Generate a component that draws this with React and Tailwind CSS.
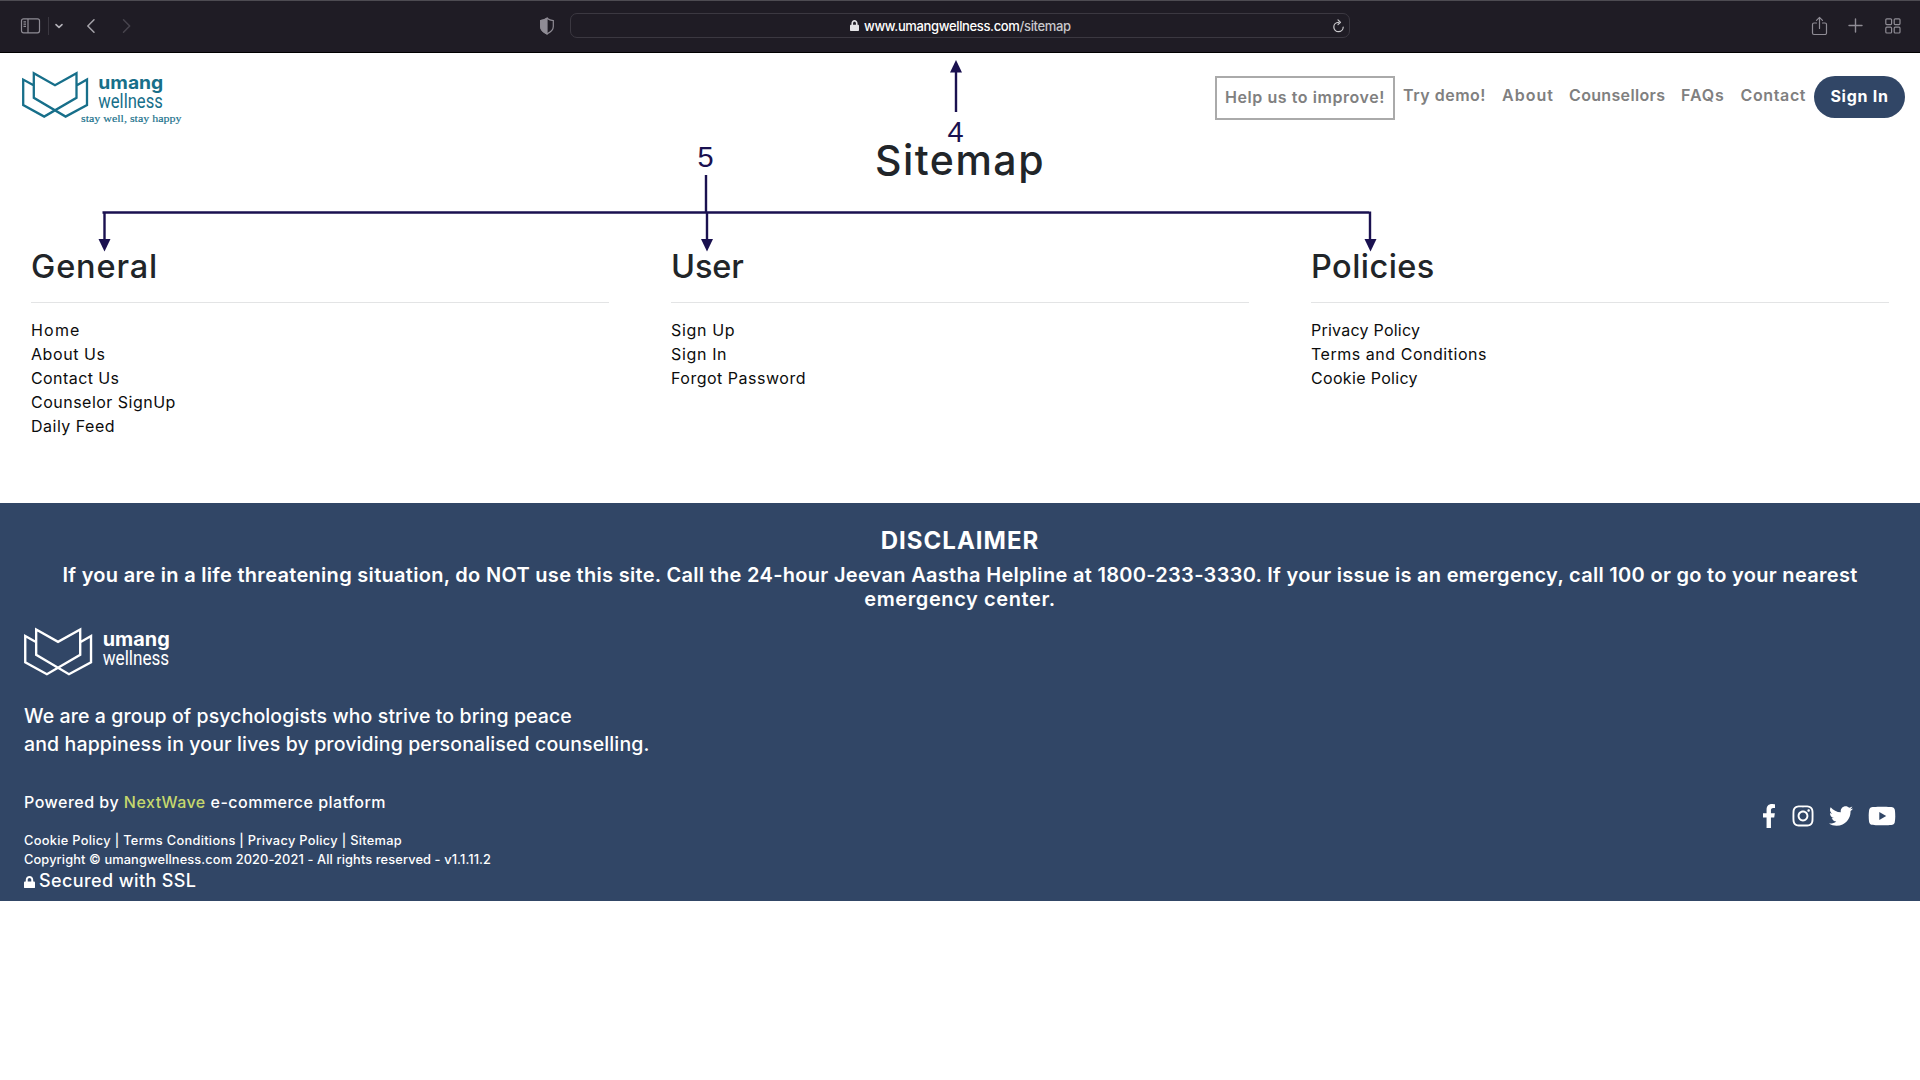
import { FaFacebookF, FaInstagram, FaTwitter, FaYoutube, FaLock } from "react-icons/fa";

const columns = [
  {
    title: "General",
    titleClass: "tracking-[0.85px]",
    links: [
      ["Home", "tracking-[1.2px]"],
      ["About Us", "tracking-[0.57px]"],
      ["Contact Us", "tracking-[0.42px]"],
      ["Counselor SignUp", "tracking-[0.49px]"],
      ["Daily Feed", "tracking-[0.49px]"],
    ],
  },
  {
    title: "User",
    titleClass: "tracking-[-0.1px]",
    links: [
      ["Sign Up", "tracking-[0.65px]"],
      ["Sign In", "tracking-[0.65px]"],
      ["Forgot Password", "tracking-[0.51px]"],
    ],
  },
  {
    title: "Policies",
    titleClass: "tracking-[0.45px]",
    links: [
      ["Privacy Policy", "tracking-[0.24px]"],
      ["Terms and Conditions", "tracking-[0.53px]"],
      ["Cookie Policy", "tracking-[0.33px]"],
    ],
  },
];

const nav = [
  ["Try demo!", "w-[99px] tracking-[0.5px]"],
  ["About", "w-[67px] tracking-[1.05px]"],
  ["Counsellors", "w-[112px] tracking-[0.34px]"],
  ["FAQs", "w-[59.5px] tracking-[0.93px]"],
  ["Contact", "w-[73.5px] tracking-[0.63px]"],
];

function Logo({ className, tagline }) {
  return (
    <svg className={className} viewBox="0 0 160 54" fill="none">
      <path
        d="M12 14.6 L1.2 8.6 V34 L22.2 45.6 L54.5 26.8 V2.2 L33 14.3 L11.8 2.2 V26.8 L43.6 45.6 L65 34 V8.6 L54.5 14.6"
        stroke="currentColor"
        strokeWidth="2.3"
      />
      <text x="76.3" y="18.1" textLength="65" lengthAdjust="spacingAndGlyphs" fill="currentColor" className="font-[Inter] text-[18.5px] font-bold">
        umang
      </text>
      <text x="76.3" y="37" textLength="64.5" lengthAdjust="spacingAndGlyphs" fill="currentColor" className="font-[Roboto] text-[19.5px]">
        wellness
      </text>
      {tagline && (
        <text x="59" y="51" textLength="100.5" lengthAdjust="spacingAndGlyphs" fill="currentColor" stroke="currentColor" strokeWidth="0.15" className="font-['Liberation_Serif'] text-[10.5px]">
          {tagline}
        </text>
      )}
    </svg>
  );
}

function BrowserBar() {
  return (
    <div className="flex h-[53px] items-center border-t border-b border-t-[#4d4b52] border-b-black bg-[#1f1c25] pb-[2px] text-[#8f8c95]">
      <svg className="ml-[20px] h-[18px] w-[21px] shrink-0" viewBox="0 0 21 18" fill="none" stroke="currentColor" strokeWidth="1.2">
        <rect x="1.5" y="1.8" width="18" height="14" rx="2" />
        <path d="M8 2v14M3.5 4.8h2.5M3.5 7.1h2.5M3.5 9.4h2.5" />
      </svg>
      <div className="ml-[7px] h-[18px] w-px bg-[#3a3740]" />
      <svg className="ml-[5px] h-[8px] w-[10px] shrink-0" viewBox="0 0 10 8" fill="none" stroke="#b3b1b8" strokeWidth="1.6" strokeLinecap="round" strokeLinejoin="round">
        <path d="M2 2.6l3 2.8 3-2.8" />
      </svg>
      <svg className="ml-[21px] h-[16px] w-[12px] shrink-0" viewBox="0 0 12 16" fill="none" stroke="#a5a3aa" strokeWidth="1.5" strokeLinecap="round" strokeLinejoin="round">
        <path d="M9 1.8L2.8 8 9 14.2" />
      </svg>
      <svg className="ml-[23px] h-[16px] w-[12px] shrink-0" viewBox="0 0 12 16" fill="none" stroke="#47444d" strokeWidth="1.5" strokeLinecap="round" strokeLinejoin="round">
        <path d="M3.5 1.8L9.7 8l-6.2 6.2" />
      </svg>
      <svg className="ml-[407px] h-[18px] w-[16px] shrink-0" viewBox="0 0 16 18" fill="none" stroke="currentColor" strokeWidth="1.2">
        <path d="M8 1.3C6 2.8 4 3.4 1.7 3.6v6c0 3.2 2.5 5.6 6.3 7.3 3.8-1.7 6.3-4.1 6.3-7.3v-6C12 3.4 10 2.8 8 1.3z" />
        <path d="M8 1.3C6 2.8 4 3.4 1.7 3.6v6c0 3.2 2.5 5.6 6.3 7.3z" fill="currentColor" />
      </svg>
      <div className="ml-[15px] flex h-[25px] w-[780px] items-center rounded-[7px] border border-[#3b3841] text-[#e4e3e6]">
        <FaLock className="ml-[279px] h-[11px] w-[9px]" preserveAspectRatio="none" />
        <span className="ml-[5px] w-[208px] whitespace-nowrap text-[13px] font-medium leading-5 tracking-[-0.356px] text-white">
          www.umangwellness.com<span className="text-[#c9c8cc]">/sitemap</span>
        </span>
        <svg className="ml-[260px] h-[14px] w-[13px]" viewBox="0 0 13 14" fill="none" stroke="#c9c8cc" strokeWidth="1.2" strokeLinecap="round" strokeLinejoin="round">
          <path d="M6.5 3.3a4.700 4.700 0 1 0 4.700 4.700M6 0.800l2.500 2.500-2.500 2.300" />
        </svg>
      </div>
      <svg className="ml-[461px] h-[20px] w-[17px] shrink-0" viewBox="0 0 17 20" fill="none" stroke="currentColor" strokeWidth="1.2" strokeLinejoin="round" strokeLinecap="round">
        <path d="M5.5 7H3a1.5 1.5 0 0 0-1.5 1.5v8.500A1.500 1.500 0 0 0 3 18.500h11a1.500 1.500 0 0 0 1.500-1.500V8.500A1.500 1.500 0 0 0 14 7h-2.500M8.500 12.500V1.300M5.500 4.300l3-3 3 3" />
      </svg>
      <svg className="ml-[20px] h-[15px] w-[15px] shrink-0" viewBox="0 0 15 15" stroke="currentColor" strokeWidth="1.4" strokeLinecap="round">
        <path d="M7.500 1v13M1 7.500h13" />
      </svg>
      <svg className="ml-[22px] h-[16px] w-[16px] shrink-0" viewBox="0 0 16 16" fill="none" stroke="currentColor" strokeWidth="1.2">
        <rect x="0.8" y="0.8" width="5.8" height="5.8" rx="1" />
        <rect x="9.2" y="0.8" width="5.8" height="5.8" rx="1" />
        <rect x="0.8" y="9.2" width="5.8" height="5.8" rx="1" />
        <rect x="9.2" y="9.2" width="5.8" height="5.8" rx="1" />
      </svg>
    </div>
  );
}

function Annotations() {
  return (
    <div className="pointer-events-none absolute inset-0 text-[#1a1150]">
      <svg className="h-[260px] w-[1400px]" viewBox="0 0 1400 260" fill="none" stroke="currentColor" strokeWidth="2.4">
        <path d="M956 112V70M706 175V212M102.5 212.5H1369M104.5 212V242M707 212V242M1370 211.5V242" />
        <g fill="currentColor" stroke="none">
          <path d="M956 60l6 12.5h-12z" />
          <path d="M104.5 251.500l-6-12.500h12z" />
          <path d="M707 251.500l-6-12.500h12z" />
          <path d="M1370.500 251.500l-6-12.500h12z" />
        </g>
      </svg>
      <span className="absolute left-[947.5px] top-[121px] font-['Liberation_Sans'] text-[29px] leading-[22px]">4</span>
      <span className="absolute left-[697.5px] top-[146px] font-['Liberation_Sans'] text-[29px] leading-[22px]">5</span>
    </div>
  );
}

export default function App() {
  return (
    <div className="relative h-[1080px] w-[1920px] overflow-hidden bg-white font-[Inter,sans-serif] text-[#212529]">
      <BrowserBar />

      <header className="flex h-[90px] items-start pt-[18px] pr-[15px] pl-[22px]">
        <Logo className="h-[54px] w-[160px] text-[#176f8a]" tagline="stay well, stay happy" />
        <nav className="mt-[5px] ml-auto flex items-start text-[16px] font-semibold text-[#808080]">
          <div className="mr-[8px] flex h-[44px] w-[180px] items-center whitespace-nowrap border-2 border-[#aaaaaa] pb-[2px] pl-[8px] tracking-[0.57px]">
            Help us to improve!
          </div>
          {nav.map(([label, cls]) => (
            <a key={label} className={"mt-[7px] whitespace-nowrap leading-6 " + cls}>
              {label}
            </a>
          ))}
          <button className="h-[42px] w-[91px] rounded-[21px] bg-[#314666] pb-[2px] font-bold tracking-[0.72px] text-white">
            Sign In
          </button>
        </nav>
      </header>

      <main className="h-[360px]">
        <h1 className="text-center text-[41px] font-medium leading-[34px] tracking-[1.5px]">Sitemap</h1>
        <div className="mt-[70px] grid grid-cols-3">
          {columns.map((col) => (
            <section key={col.title} className="px-[31px]">
              <h2 className={"text-[32.5px] font-medium leading-10 " + col.titleClass}>{col.title}</h2>
              <hr className="mt-[15px] mb-[15px] border-t border-[#e3e4e5]" />
              <ul className="text-[16px] leading-6 text-[#0c0c0c]">
                {col.links.map(([label, cls]) => (
                  <li key={label} className={cls}>
                    {label}
                  </li>
                ))}
              </ul>
            </section>
          ))}
        </div>
      </main>

      <footer className="h-[398px] bg-[#314666] px-[24px] pt-[23px] text-white">
        <h3 className="text-center text-[24px] font-bold leading-[30px] tracking-[1px]">DISCLAIMER</h3>
        <div className="mt-[7px] whitespace-nowrap text-center text-[20px] font-semibold leading-6">
          <p className="tracking-[0.3px]">
            If you are in a life threatening situation, do NOT use this site. Call the 24-hour Jeevan Aastha Helpline at 1800-233-3330. If your issue is an emergency, call 100 or go to your nearest
          </p>
          <p className="tracking-[0.6px]">emergency center.</p>
        </div>
        <Logo className="mt-[16px] h-[56px] w-[165px]" />
        <div className="mt-[19px] text-[19.5px] font-medium leading-7">
          <p className="tracking-[0.1px]">We are a group of psychologists who strive to bring peace</p>
          <p className="tracking-[0.13px]">and happiness in your lives by providing personalised counselling.</p>
        </div>
        <div className="mt-[32px] flex justify-between">
          <div className="font-medium">
            <p className="text-[16px] leading-6 tracking-[0.49px]">
              Powered by <span className="text-[#c5d86d]">NextWave</span> e-commerce platform
            </p>
            <p className="mt-[17px] text-[12.8px] leading-[19px] tracking-[0.31px]">
              Cookie Policy | Terms Conditions | Privacy Policy | Sitemap
            </p>
            <p className="text-[12.8px] leading-[19px] tracking-[0.12px]">
              Copyright © umangwellness.com 2020-2021 - All rights reserved - v1.1.11.2
            </p>
            <p className="flex items-center text-[18px] leading-[23px] tracking-[0.39px]">
              <FaLock className="mt-[3px] mr-[4px] h-[12.5px] w-[11px]" preserveAspectRatio="none" />
              Secured with SSL
            </p>
          </div>
          <div className="mt-[14px] flex h-[24px] items-center">
            <FaFacebookF className="h-[24px] w-[14px]" preserveAspectRatio="none" />
            <FaInstagram className="ml-[15px] h-[24px] w-[24px]" />
            <FaTwitter className="ml-[14px] h-[24px] w-[24px]" />
            <FaYoutube className="ml-[15px] h-[26px] w-[28px]" />
          </div>
        </div>
      </footer>

      <Annotations />
    </div>
  );
}
